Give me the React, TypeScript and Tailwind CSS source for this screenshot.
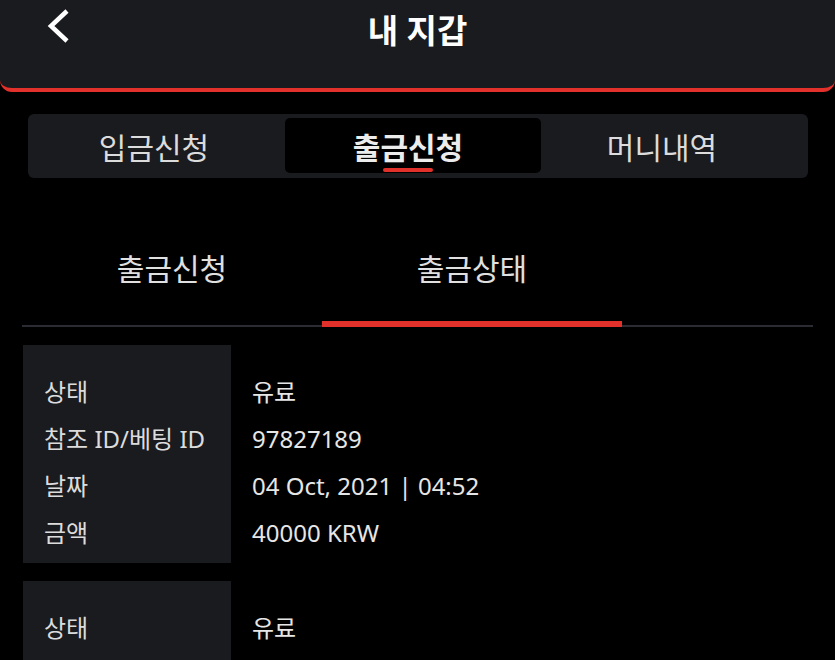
import { useState } from 'react';

const MAIN_TABS = [
  { key: 'deposit', label: '입금신청', className: 'w-[253px] pr-[9px]' },
  { key: 'withdraw', label: '출금신청', className: 'w-[256px] pr-[10px]' },
  { key: 'history', label: '머니내역', className: 'flex-1 pr-[21px]' },
];

const SUB_TABS = [
  { key: 'request', label: '출금신청' },
  { key: 'status', label: '출금상태' },
];

const RECORDS = [
  {
    id: 97827189,
    status: '유료',
    date: '04 Oct, 2021 | 04:52',
    amount: '40000 KRW',
  },
  {
    id: 97827190,
    status: '유료',
    date: '04 Oct, 2021 | 04:52',
    amount: '40000 KRW',
  },
];

function BackIcon() {
  return (
    <svg width="26" height="38" viewBox="0 0 26 38" fill="none">
      <polyline
        points="21,4 5,19 21,34"
        stroke="#ffffff"
        strokeWidth="4.5"
        strokeLinejoin="miter"
      />
    </svg>
  );
}

export default function App() {
  const [mainTab, setMainTab] = useState('withdraw');
  const [subTab, setSubTab] = useState('status');

  return (
    <div
      className="min-h-screen bg-black text-[#e4e4e4] overflow-hidden"
      style={{ fontFamily: '"Noto Sans", "Noto Sans CJK KR", sans-serif' }}
    >
      {/* Header */}
      <header className="h-[92px] bg-[#1a1b1f] rounded-b-[12px] border-b-4 border-[#e2302a] grid grid-cols-[1fr_auto_1fr] items-start">
        <button className="justify-self-start pl-[46px] pt-[7px]">
          <BackIcon />
        </button>
        <h1 className="pt-[10px] text-[33px] leading-[42px] font-bold text-white">내 지갑</h1>
        <div />
      </header>

      {/* Main tabs */}
      <nav className="mt-[22px] ml-[28px] w-[780px] h-[64px] p-[4px] pb-[5px] flex rounded-[6px] bg-[#1a1b1f]">
        {MAIN_TABS.map((tab) => {
          const active = tab.key === mainTab;
          return (
            <button
              key={tab.key}
              onClick={() => setMainTab(tab.key)}
              className={`${tab.className} flex items-center justify-center rounded-[5px] text-[30px] leading-[36px] ${
                active ? 'bg-black font-bold text-[#ececec]' : 'text-[#dcdcdc]'
              }`}
            >
              <span className="relative pt-[4px]">
                {tab.label}
                {active && (
                  <span className="absolute left-1/2 -translate-x-1/2 -bottom-[6px] w-[50px] h-[4px] rounded-full bg-[#e2302a]" />
                )}
              </span>
            </button>
          );
        })}
      </nav>

      {/* Sub tabs */}
      <div className="mt-[71px] mx-[22px] flex border-b-2 border-[#2a2b33]">
        {SUB_TABS.map((tab) => (
          <button
            key={tab.key}
            onClick={() => setSubTab(tab.key)}
            className={`w-[300px] pb-[32px] text-[30px] leading-[40px] text-[#e0e0e0] border-b-[6px] -mb-[2px] ${
              tab.key === subTab ? 'border-[#e2302a]' : 'border-transparent'
            }`}
          >
            {tab.label}
          </button>
        ))}
      </div>

      {/* Records */}
      <div className="mt-[18px] mx-[23px] flex flex-col gap-[18px]">
        {RECORDS.map((rec) => (
          <div key={rec.id} className="flex text-[24px] leading-[47px]">
            <div className="w-[208px] bg-[#1a1b1f] pl-[21px] pt-[23px] pb-[7px] text-[#dcdcdc]">
              <div>상태</div>
              <div>참조 ID/베팅 ID</div>
              <div>날짜</div>
              <div>금액</div>
            </div>
            <div className="flex-1 pl-[21px] pt-[23px] pb-[7px] text-[#e6e6e6]">
              <div>{rec.status}</div>
              <div>{rec.id}</div>
              <div>{rec.date}</div>
              <div>{rec.amount}</div>
            </div>
          </div>
        ))}
      </div>
    </div>
  );
}
